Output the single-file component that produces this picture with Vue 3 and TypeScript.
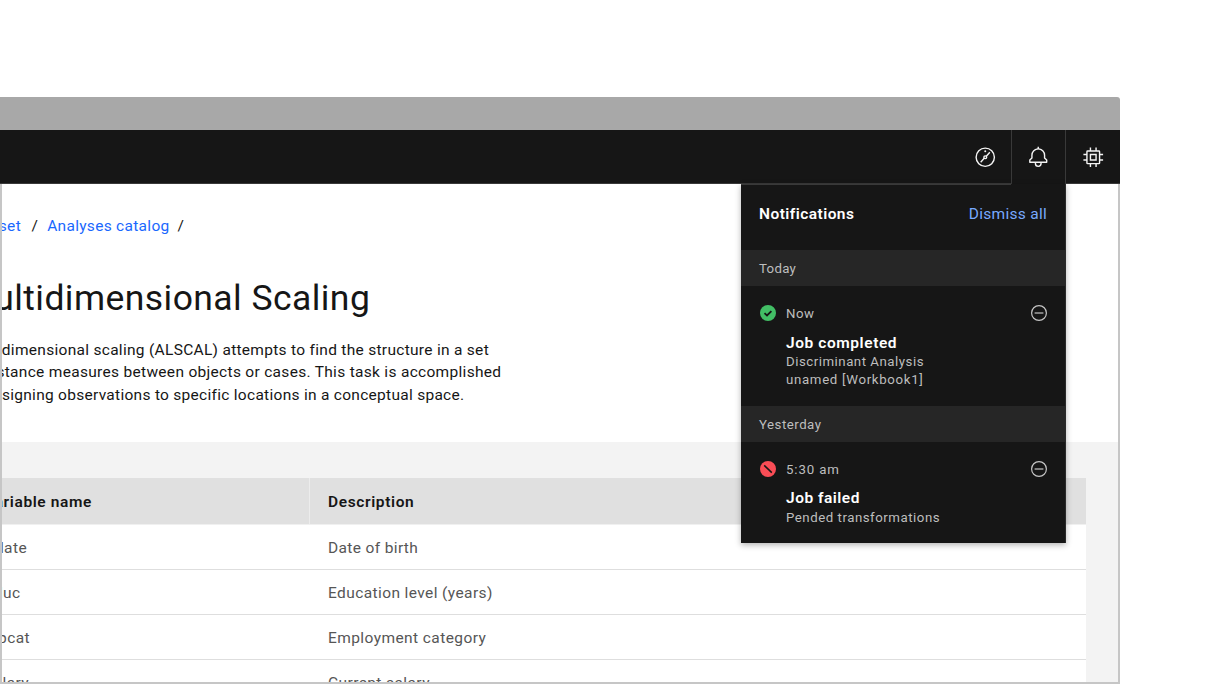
<script setup lang="ts">
interface Variable { name: string; description: string; end: number; spacing: number }
interface Notice { kind: 'success' | 'failed'; time: string; title: string; lines: { text: string; spacing: number }[] }
interface Group { label: string; notices: Notice[] }

const variables: Variable[] = [
  { name: 'bdate', description: 'Date of birth', end: 27, spacing: 0.36 },
  { name: 'educ', description: 'Education level (years)', end: 20.5, spacing: 0.4 },
  { name: 'jobcat', description: 'Employment category', end: 30, spacing: 0.417 },
  { name: 'salary', description: 'Current salary', end: 29, spacing: 0.42 },
]

const intro = [
  { text: 'Multidimensional scaling (ALSCAL) attempts to find the structure in a set', end: 489, spacing: 0.295 },
  { text: 'of distance measures between objects or cases. This task is accomplished', end: 501.4, spacing: 0.305 },
  { text: 'by assigning observations to specific locations in a conceptual space.', end: 464.4, spacing: 0.285 },
]

const groups: Group[] = [
  {
    label: 'Today',
    notices: [{
      kind: 'success', time: 'Now', title: 'Job completed',
      lines: [{ text: 'Discriminant Analysis', spacing: 0.51 }, { text: 'unamed [Workbook1]', spacing: 0.68 }],
    }],
  },
  {
    label: 'Yesterday',
    notices: [{
      kind: 'failed', time: '5:30 am', title: 'Job failed',
      lines: [{ text: 'Pended transformations', spacing: 0.525 }],
    }],
  },
]
</script>

<template>
  <main class="stage">
    <div class="window">
      <div class="titlebar"></div>
      <header class="header">
        <button class="action" aria-label="Explore">
          <svg viewBox="0 0 32 32"><circle cx="16" cy="16" r="13" /><circle cx="16" cy="16" r="2" /><path d="M17.5 14.5 22.5 9M14.5 17.5 9.5 23" /><circle class="dot" cx="16" cy="7.5" r="1.4" /></svg>
        </button>
        <button class="action active" aria-label="Notifications">
          <svg viewBox="0 0 32 32"><path class="fill" d="M28.7 19.3 26 16.6V13a10 10 0 0 0-9-9.95V1h-2v2.05A10 10 0 0 0 6 13v3.6l-2.7 2.7A1 1 0 0 0 3 20v3a1 1 0 0 0 1 1h7v.8a5 5 0 0 0 10 .2v-1h7a1 1 0 0 0 1-1v-3a1 1 0 0 0-.3-.7ZM19 25a3 3 0 0 1-6 0v-1h6Zm8-3H5v-1.6l2.7-2.7A1 1 0 0 0 8 17v-4a8 8 0 0 1 16 0v4a1 1 0 0 0 .3.7l2.7 2.7Z" /></svg>
        </button>
        <button class="action" aria-label="System">
          <svg viewBox="0 0 32 32"><path class="fill" d="M11 11v10h10V11Zm8 8h-6v-6h6Z" /><path class="fill" d="M30 13v-2h-4V8a2 2 0 0 0-2-2h-3V2h-2v4h-6V2h-2v4H8a2 2 0 0 0-2 2v3H2v2h4v6H2v2h4v3a2 2 0 0 0 2 2h3v4h2v-4h6v4h2v-4h3a2 2 0 0 0 2-2v-3h4v-2h-4v-6Zm-6 11H8V8h16Z" /></svg>
        </button>
      </header>

      <section class="body">
        <nav class="crumbs">
          <div class="crumb-first"><a>Dataset</a></div>
          <span class="slash">/</span>
          <a class="crumb">Analyses catalog</a>
          <span class="slash">/</span>
        </nav>
        <h1 class="title"><span>Multidimensional Scaling</span></h1>
        <div class="intro">
          <div v-for="line in intro" :key="line.text" class="line" :style="{ width: line.end + 'px', letterSpacing: line.spacing + 'px' }">
            <span>{{ line.text }}</span>
          </div>
        </div>

        <div class="data">
          <div class="table">
            <div class="row head">
              <div class="name"><div class="clip name-head"><span>Variable name</span></div></div>
              <div class="desc">Description</div>
            </div>
            <div v-for="v in variables" :key="v.name" class="row">
              <div class="name"><div class="clip" :style="{ width: v.end + 'px' }"><span>{{ v.name }}</span></div></div>
              <div class="desc" :style="{ letterSpacing: v.spacing + 'px' }">{{ v.description }}</div>
            </div>
          </div>
        </div>
        <div class="frame"></div>
      </section>

      <aside class="panel">
        <div class="panel-head">
          <h2>Notifications</h2>
          <a>Dismiss all</a>
        </div>
        <template v-for="g in groups" :key="g.label">
          <div class="group" :class="g.label.toLowerCase()">{{ g.label }}</div>
          <article v-for="n in g.notices" :key="n.title" class="notice" :class="n.kind">
            <svg class="status" viewBox="0 0 16 16">
              <circle cx="8" cy="8" r="8" />
              <path v-if="n.kind === 'success'" d="M4.5 8.2 7 10.5l4.4-4.4" />
              <path v-else d="M4.2 4.4l7.6 7.2" />
            </svg>
            <div class="content">
              <div class="time">{{ n.time }}</div>
              <h3>{{ n.title }}</h3>
              <p v-for="l in n.lines" :key="l.text" :style="{ letterSpacing: l.spacing + 'px' }">{{ l.text }}</p>
            </div>
            <svg class="dismiss" viewBox="0 0 16 16"><circle cx="8" cy="8" r="7.4" /><path d="M3.6 8h8.8" /></svg>
          </article>
        </template>
      </aside>
    </div>
  </main>
</template>

<style>
body { margin: 0; background: #fff; }
</style>

<style scoped>
.stage { width: 1216px; height: 684px; overflow: hidden; box-sizing: border-box; padding-top: 96.5px; font: 15.5px/22.5px Roboto, "Liberation Sans", sans-serif; color: #161616; background: #fff; }
.window { position: relative; width: 1120px; height: 587.5px; }
h1, h2, h3, p { margin: 0; font: inherit; }
.titlebar { height: 33.5px; background: #a8a8a8; border-radius: 0 3px 0 0; }
.header { display: flex; justify-content: flex-end; height: 54px; background: #161616; box-sizing: border-box; border-bottom: 1px solid #393939; }
.action { display: grid; place-items: center; width: 54px; height: 54px; padding: 0; border: 0; background: #161616; box-sizing: border-box; }
.action:first-child { background: none; padding-left: 2px; }
.action.active { width: 55px; height: 55px; padding: 0 0 1px; border: solid #393939; border-width: 0 1px; }
.action:last-child { background: none; }
.action svg { width: 22.5px; height: 22.5px; fill: none; stroke: #f4f4f4; stroke-width: 2; }
.action .fill, .action .dot { fill: #f4f4f4; stroke: none; }

.body { position: relative; height: 500px; overflow: hidden; }
.frame { position: absolute; inset: 0; border: 2px solid #c6c6c6; border-top: 0; }
.crumbs { display: flex; padding-top: 30.5px; letter-spacing: 0.295px; }
.crumbs a { color: #1a68fe; }
.crumb-first { display: flex; justify-content: flex-end; width: 21px; }
.slash { width: 26.2px; box-sizing: border-box; padding-left: 10.5px; }
.crumb { width: 120.4px; white-space: nowrap; }
.crumb + .slash { padding-left: 10px; }
.title { display: flex; justify-content: flex-end; width: 370.3px; margin-top: 38.5px; font-size: 35.5px; line-height: 45px; letter-spacing: 0.44px; white-space: nowrap; }
.intro { margin-top: 18px; height: 103px; }
.line { display: flex; justify-content: flex-end; white-space: nowrap; }
.data { height: 300px; padding-top: 36.5px; background: #f3f3f3; }
.table { width: 1086px; background: #fff; }
.row { display: flex; height: 45px; box-sizing: border-box; padding-top: 3px; border-bottom: 1px solid #dedede; align-items: center; color: #565656; }
.row.head { height: 47px; padding-top: 0; background: #e0e0e0; color: #161616; font-weight: 600; border-bottom-color: #f0f0f0; }
.name { width: 310px; box-sizing: border-box; }
.head .name { height: 100%; display: flex; align-items: center; padding-top: 2px; border-right: 1px solid #ececec; }
.clip { display: flex; justify-content: flex-end; white-space: nowrap; letter-spacing: 0.4px; }
.name-head { width: 92px; letter-spacing: 0.61px; }
.desc { padding-left: 18px; }
.head .desc { padding-top: 2px; letter-spacing: 0.62px; }

.panel { position: absolute; top: 87.5px; left: 741px; width: 325px; height: 359px; box-sizing: border-box; background: #161616; border-right: 1px solid #2a2a2a; box-shadow: 0 2px 6px rgba(0, 0, 0, 0.3); color: #bebebe; }
.panel::before { content: ""; position: absolute; left: 0; top: 0; width: 270px; height: 1px; background: #393939; }
.panel-head { display: flex; justify-content: space-between; height: 66px; box-sizing: border-box; padding: 18.5px 18px 0; }
.panel-head h2 { color: #fff; font-weight: 600; letter-spacing: 0.45px; }
.panel-head a { color: #78a9ff; letter-spacing: 0.28px; }
.group { height: 36px; background: #262626; padding-left: 18px; font-size: 13.25px; line-height: 37px; letter-spacing: 0.5px; }
.group.today { letter-spacing: 0.3px; }
.notice { display: flex; height: 119.6px; box-sizing: border-box; padding: 18px 18px 0 19px; }
.notice.failed { height: 100px; }
.status { width: 16px; height: 16px; margin-top: 1px; fill: #42be65; }
.status path { fill: none; stroke: #161616; stroke-width: 1.8; }
.failed .status { fill: #fa4d56; }
.failed .status path { stroke-width: 1.5; }
.content { flex: 1; padding: 1px 0 0 10px; font-size: 13.25px; line-height: 18px; letter-spacing: 0.5px; }
.failed .time { letter-spacing: 0.86px; }
.content h3 { margin-top: 9px; font-size: 15.5px; font-weight: 600; line-height: 22px; letter-spacing: 0.575px; color: #fff; }
.failed h3 { margin-top: 8px; letter-spacing: 0.5px; }
.content h3 + p { margin-top: -1px; }
.failed h3 + p { margin-top: 0; }
.dismiss { width: 16px; height: 16px; margin-top: 1px; fill: none; stroke: #c6c6c6; stroke-width: 1.2; }
</style>
